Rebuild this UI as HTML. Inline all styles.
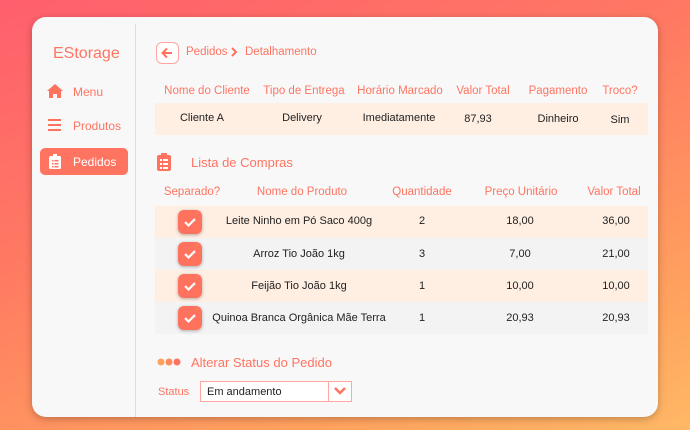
<!DOCTYPE html>
<html><head><meta charset="utf-8"><style>
*{margin:0;padding:0;box-sizing:border-box}
body{width:690px;height:430px;overflow:hidden;font-family:"Liberation Sans",sans-serif;background:linear-gradient(160deg,#ff5f6d 0%,#ff7a62 40%,#ffa25e 80%,#ffb866 100%);position:relative}
.card{position:absolute;left:32px;top:17px;width:626px;height:400px;background:#f8f8f8;border-radius:14px;box-shadow:0 2px 8px rgba(0,0,0,.25)}
.a{position:absolute;white-space:nowrap}
.o{color:#ff7461}
.h{font-size:11.5px;color:#ff7461;text-align:center}
.t{font-size:11px;color:#222;text-align:center}
.row{position:absolute;left:155px;width:493px;height:32px}
.cb{position:absolute;left:178px;width:24px;height:24px;background:#ff725e;border-radius:6px;box-shadow:0 1px 3px rgba(0,0,0,.3)}
</style></head><body>
<div class="card"></div>
<div class="a" style="left:135px;top:24px;width:1px;height:393px;background:#ddd"></div>
<div class="a o" style="left:53px;top:45px;font-size:16px">EStorage</div>
<svg class="a" style="left:46px;top:83px" width="18" height="16" viewBox="0 0 18 16"><path d="M9 1L1 8h2v7h4v-4h4v4h4V8h2z" fill="#ff725e"/></svg>
<div class="a o" style="left:73px;top:85px;font-size:12px">Menu</div>
<svg class="a" style="left:48px;top:119px" width="13" height="12"><rect y="0" width="13" height="2" fill="#ff725e"/><rect y="5" width="13" height="2" fill="#ff725e"/><rect y="10" width="13" height="2" fill="#ff725e"/></svg>
<div class="a o" style="left:73px;top:119px;font-size:12px">Produtos</div>
<div class="a" style="left:40px;top:148px;width:88px;height:27px;background:#ff7461;border-radius:5px"></div>
<svg class="a" style="left:49px;top:154px" width="12" height="15"><rect x="0" y="2" width="12" height="13" rx="1.5" fill="#fff"/><rect x="4" y="0" width="4" height="3" fill="#fff"/><g fill="#ff7461"><rect x="3" y="6" width="1.5" height="1.5"/><rect x="3" y="9" width="1.5" height="1.5"/><rect x="3" y="12" width="1.5" height="1.5"/><rect x="5.5" y="6" width="4" height="1.5"/><rect x="5.5" y="9" width="4" height="1.5"/><rect x="5.5" y="12" width="4" height="1.5"/></g></svg>
<div class="a" style="left:73px;top:155px;font-size:12px;color:#fff">Pedidos</div>
<div class="a" style="left:156px;top:42px;width:23px;height:22px;border:1px solid #ffa6a0;border-radius:6px;background:#fff"></div>
<svg class="a" style="left:161px;top:47px" width="13" height="12" viewBox="0 0 13 12"><path d="M11 6H2M6 1.5L1.5 6 6 10.5" stroke="#ff725e" stroke-width="2" fill="none"/></svg>
<div class="a o" style="left:186px;top:46px;font-size:11.5px">Pedidos</div>
<svg class="a" style="left:231px;top:47px" width="7" height="10"><path d="M1 1l4 4-4 4" stroke="#ff725e" stroke-width="2" fill="none"/></svg>
<div class="a o" style="left:245px;top:46px;font-size:11.5px">Detalhamento</div>

<div class="a h" style="left:160px;top:85px;width:94px">Nome do Cliente</div>
<div class="a h" style="left:258px;top:85px;width:92px">Tipo de Entrega</div>
<div class="a h" style="left:354px;top:85px;width:92px">Horário Marcado</div>
<div class="a h" style="left:450px;top:85px;width:66px">Valor Total</div>
<div class="a h" style="left:522px;top:85px;width:72px">Pagamento</div>
<div class="a h" style="left:598px;top:85px;width:44px">Troco?</div>
<div class="row" style="top:103px;background:#ffeee2"></div>
<div class="a t" style="left:160px;top:112px;width:84px">Cliente A</div>
<div class="a t" style="left:262px;top:112px;width:80px">Delivery</div>
<div class="a t" style="left:354px;top:112px;width:90px">Imediatamente</div>
<div class="a t" style="left:450px;top:113px;width:56px">87,93</div>
<div class="a t" style="left:522px;top:113px;width:72px">Dinheiro</div>
<div class="a t" style="left:598px;top:114px;width:44px">Sim</div>

<svg class="a" style="left:157px;top:153px" width="14" height="18"><rect x="0" y="2" width="14" height="16" rx="2" fill="#ff725e"/><rect x="4" y="0" width="6" height="4" rx="1" fill="#ff725e"/><g fill="#fff"><rect x="3" y="6" width="2" height="2"/><rect x="3" y="10" width="2" height="2"/><rect x="3" y="14" width="2" height="2"/><rect x="6" y="6" width="5" height="2"/><rect x="6" y="10" width="5" height="2"/><rect x="6" y="14" width="5" height="2"/></g></svg>
<div class="a o" style="left:191px;top:155px;font-size:13px">Lista de Compras</div>

<div class="a h" style="left:160px;top:186px;width:64px">Separado?</div>
<div class="a h" style="left:240px;top:186px;width:124px">Nome do Produto</div>
<div class="a h" style="left:388px;top:186px;width:68px">Quantidade</div>
<div class="a h" style="left:478px;top:186px;width:86px">Preço Unitário</div>
<div class="a h" style="left:584px;top:186px;width:60px">Valor Total</div>

<div class="row" style="top:206px;background:#ffeee2"></div>
<div class="row" style="top:238px;background:#f3f3f3"></div>
<div class="row" style="top:270px;background:#ffeee2"></div>
<div class="row" style="top:302px;background:#f3f3f3"></div>

<div class="cb" style="top:210px"></div><div class="cb" style="top:242px"></div><div class="cb" style="top:274px"></div><div class="cb" style="top:306px"></div>
<svg class="a" style="left:178px;top:210px" width="24" height="120"><g stroke="#fff" stroke-width="2.2" fill="none"><path d="M7 12l3.5 3.5L17 9"/><path d="M7 44l3.5 3.5L17 41"/><path d="M7 76l3.5 3.5L17 73"/><path d="M7 108l3.5 3.5L17 105"/></g></svg>

<div class="a t" style="left:214px;top:215px;width:170px">Leite Ninho em Pó Saco 400g</div>
<div class="a t" style="left:214px;top:248px;width:170px">Arroz Tio João 1kg</div>
<div class="a t" style="left:214px;top:280px;width:170px">Feijão Tio João 1kg</div>
<div class="a t" style="left:210px;top:312px;width:178px">Quinoa Branca Orgânica Mãe Terra</div>
<div class="a t" style="left:412px;top:215px;width:20px">2</div>
<div class="a t" style="left:412px;top:248px;width:20px">3</div>
<div class="a t" style="left:412px;top:280px;width:20px">1</div>
<div class="a t" style="left:412px;top:312px;width:20px">1</div>
<div class="a t" style="left:500px;top:215px;width:40px">18,00</div>
<div class="a t" style="left:500px;top:248px;width:40px">7,00</div>
<div class="a t" style="left:500px;top:280px;width:40px">10,00</div>
<div class="a t" style="left:500px;top:312px;width:40px">20,93</div>
<div class="a t" style="left:596px;top:215px;width:40px">36,00</div>
<div class="a t" style="left:596px;top:248px;width:40px">21,00</div>
<div class="a t" style="left:596px;top:280px;width:40px">10,00</div>
<div class="a t" style="left:596px;top:312px;width:40px">20,93</div>

<svg class="a" style="left:157px;top:358px" width="26" height="8"><circle cx="4" cy="4" r="3.5" fill="#ffa259"/><circle cx="12" cy="4" r="3.5" fill="#ff8a5c"/><circle cx="20" cy="4" r="3.5" fill="#ff725e"/></svg>
<div class="a o" style="left:191px;top:355px;font-size:13px">Alterar Status do Pedido</div>
<div class="a o" style="left:158px;top:386px;font-size:11px">Status</div>
<div class="a" style="left:200px;top:381px;width:152px;height:21px;border:1px solid #ffa6a0;background:#fff"></div>
<div class="a" style="left:328px;top:381px;width:1px;height:21px;background:#ffa6a0"></div>
<div class="a" style="left:207px;top:386px;font-size:11px;color:#222">Em andamento</div>
<svg class="a" style="left:333px;top:386px" width="14" height="10"><path d="M2 2l5 5 5-5" stroke="#ff725e" stroke-width="2.5" fill="none"/></svg>
</body></html>
